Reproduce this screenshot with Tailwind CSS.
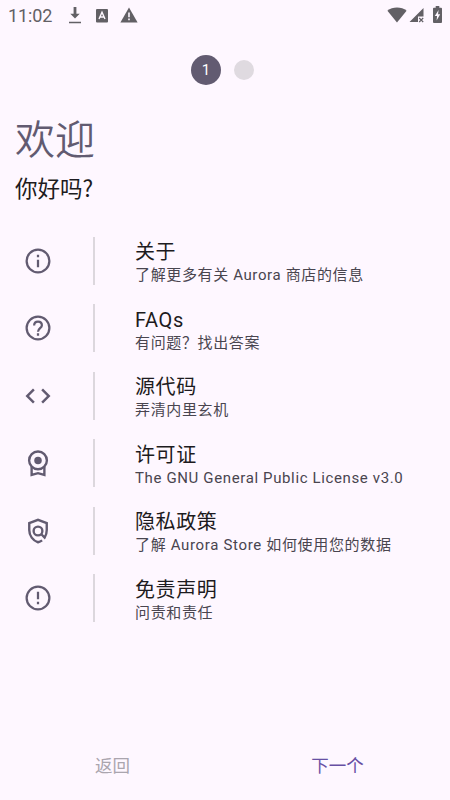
<!DOCTYPE html>
<html lang="zh-CN">
<head>
<meta charset="utf-8">
<title>欢迎</title>
<script src="https://cdn.jsdelivr.net/npm/@tailwindcss/browser@4"></script>
</head>
<body class="bg-[#fef7ff]">
<main class="w-[450px] h-[800px] overflow-hidden flex flex-col bg-[#fef7ff] font-[Roboto,'Noto_Sans_CJK_SC',sans-serif] text-[#1d1b20]">
  <header class="h-[32px] shrink-0 flex items-center pl-[8px] pr-[8px] text-[#626065]">
    <span class="w-[60px] text-[18px] leading-[32px] tracking-[-0.1px]">11:02</span>
    <svg class="w-[14px] h-[18px] -mt-[2px]" viewBox="0 0 14 18" fill="currentColor"><path d="M5.600 1h2.800v6.800h3.300L7 12.500 2.300 7.800h3.300zM1 15.700h12v1.500H1z"/></svg>
    <svg class="w-[12px] h-[14px] ml-[14px] -mt-[1px]" viewBox="0 0 12 14"><rect width="12" height="13.500" rx="1" fill="currentColor"/><path d="M3 10 6 3.200 9 10M4.200 8h3.600" fill="none" stroke="#fef7ff" stroke-width="1.400"/></svg>
    <svg class="w-[18px] h-[16px] ml-[12px] -mt-[2px]" viewBox="0 0 18 16"><path d="M9 0.500 17.600 15.500H.4z" fill="currentColor"/><path d="M8.200 5.500h1.600v4.800H8.200zM8.200 11.600h1.600v1.700H8.200z" fill="#fef7ff"/></svg>
    <svg class="w-[20px] h-[16px] ml-auto -mt-[2px]" viewBox="0 0 20 16" fill="currentColor"><path d="M10 15.500.4 3.700C3 1.700 6.300.5 10 .5s7 1.200 9.600 3.200z"/></svg>
    <svg class="w-[16px] h-[16px] ml-[2px]" viewBox="0 0 16 16"><path d="M14.500 0v8.500H9V14H.5z" fill="currentColor"/><path d="m10.200 10 4 4m0-4-4 4" stroke="currentColor" stroke-width="1.200"/></svg>
    <svg class="w-[9px] h-[17px] ml-[8px] -mt-[3px]" viewBox="0 0 10 17" preserveAspectRatio="none"><path d="M3 0h4v1.700h2a1 1 0 0 1 1 1V16a1 1 0 0 1-1 1H1a1 1 0 0 1-1-1V2.700a1 1 0 0 1 1-1h2z" fill="currentColor"/><path d="M6.200 4 2 10h2.500L4 14.500 8 8.300H5.600z" fill="#fef7ff"/></svg>
  </header>

  <div class="h-[76px] shrink-0 flex items-center justify-center gap-[13px] pr-[5px]">
    <span class="w-[30px] h-[30px] rounded-full bg-[#625b71] text-white text-[15px] leading-[30px] text-center">1</span>
    <span class="w-[20px] h-[20px] rounded-full bg-[#dfdae0]"></span>
  </div>

  <section class="pl-[15px] h-[128.5px] shrink-0">
    <h1 class="text-[40px] leading-[58px] text-[#625b71] font-['Noto_Sans_CJK_SC'] font-[350]">欢迎</h1>
    <h2 class="text-[22.5px] leading-[43px] font-['Noto_Sans_CJK_SC',sans-serif]">你好吗?</h2>
  </section>

  <ul class="flex flex-col gap-[19.5px] pl-[22.5px] text-[#625b71]">
    <li class="flex items-center h-[48px]">
      <svg class="w-[30px] h-[30px]" viewBox="0 0 24 24" fill="none" stroke="currentColor" stroke-width="1.8"><circle cx="12" cy="12" r="9.1"/><path d="M12 11v6M12 7v2"/></svg>
      <span class="w-[2px] h-[48px] ml-[40.5px] bg-[#dcd7dd]"></span>
      <div class="ml-[40px] pt-[5px]"><p class="text-[20px] leading-[24px] tracking-[0.6px] text-[#1d1b20]">关于</p><p class="text-[15px] leading-[22px] tracking-[0.63px] text-[#49454f]">了解更多有关 Aurora 商店的信息</p></div>
    </li>
    <li class="flex items-center h-[48px]">
      <svg class="w-[30px] h-[30px]" viewBox="0 0 24 24" fill="none" stroke="currentColor" stroke-width="1.8"><circle cx="12" cy="12" r="9.1"/><path d="M8.900 10c0-1.900 1.300-3.200 3.100-3.200s3.100 1.200 3.100 2.900c0 2.300-3.100 2.500-3.100 5.300M12 16.100v2"/></svg>
      <span class="w-[2px] h-[48px] ml-[40.5px] bg-[#dcd7dd]"></span>
      <div class="ml-[40px] pt-[5px]"><p class="text-[20px] leading-[24px] tracking-[0.6px] text-[#1d1b20]">FAQs</p><p class="text-[15px] leading-[22px] tracking-[0.63px] text-[#49454f]">有问题？找出答案</p></div>
    </li>
    <li class="flex items-center h-[48px]">
      <svg class="w-[30px] h-[30px]" viewBox="0 0 24 24" fill="currentColor"><path d="M9.400 16.600 4.800 12l4.600-4.600L8 6l-6 6 6 6 1.400-1.400zm5.200 0 4.600-4.600-4.600-4.600L16 6l6 6-6 6-1.400-1.400z"/></svg>
      <span class="w-[2px] h-[48px] ml-[40.5px] bg-[#dcd7dd]"></span>
      <div class="ml-[40px] pt-[5px]"><p class="text-[20px] leading-[24px] tracking-[0.6px] text-[#1d1b20]">源代码</p><p class="text-[15px] leading-[22px] tracking-[0.63px] text-[#49454f]">弄清内里玄机</p></div>
    </li>
    <li class="flex items-center h-[48px]">
      <svg class="w-[30px] h-[30px]" viewBox="0 0 24 24"><g fill="none" stroke="currentColor" stroke-width="1.900"><circle cx="12" cy="9.900" r="7.100"/><path d="M6.900 15v6.600l5.100-1.500 5.100 1.500V15"/></g><circle cx="12" cy="9.900" r="3" fill="currentColor"/></svg>
      <span class="w-[2px] h-[48px] ml-[40.5px] bg-[#dcd7dd]"></span>
      <div class="ml-[40px] pt-[5px]"><p class="text-[20px] leading-[24px] tracking-[0.6px] text-[#1d1b20]">许可证</p><p class="text-[15px] leading-[22px] tracking-[0.63px] text-[#49454f]">The GNU General Public License v3.0</p></div>
    </li>
    <li class="flex items-center h-[48px]">
      <svg class="w-[30px] h-[30px]" viewBox="0 0 24 24" fill="none" stroke="currentColor" stroke-width="1.900"><path d="M15.300 19.500c-1 .7-2.100 1.200-3.300 1.500-4.100-1.200-7-5.300-7-9.900V5.700l7-2.600 7 2.600v5.400c0 2.300-.6 4.400-1.700 6.100l-3-3"/><circle cx="12" cy="12" r="3.500"/></svg>
      <span class="w-[2px] h-[48px] ml-[40.5px] bg-[#dcd7dd]"></span>
      <div class="ml-[40px] pt-[5px]"><p class="text-[20px] leading-[24px] tracking-[0.6px] text-[#1d1b20]">隐私政策</p><p class="text-[15px] leading-[22px] tracking-[0.66px] text-[#49454f]">了解 Aurora Store 如何使用您的数据</p></div>
    </li>
    <li class="flex items-center h-[48px]">
      <svg class="w-[30px] h-[30px]" viewBox="0 0 24 24" fill="none" stroke="currentColor" stroke-width="1.8"><circle cx="12" cy="12" r="9.1"/><path d="M12 7v6M12 15v2"/></svg>
      <span class="w-[2px] h-[48px] ml-[40.5px] bg-[#dcd7dd]"></span>
      <div class="ml-[40px] pt-[5px]"><p class="text-[20px] leading-[24px] tracking-[0.6px] text-[#1d1b20]">免责声明</p><p class="text-[15px] leading-[22px] tracking-[0.63px] text-[#49454f]">问责和责任</p></div>
    </li>
  </ul>

  <footer class="mt-auto h-[69px] shrink-0 grid grid-cols-2 text-[17.500px] leading-[70px] text-center">
    <button class="text-[#aaa5ae]">返回</button>
    <button class="text-[#6750a4]">下一个</button>
  </footer>
</main>
</body>
</html>
